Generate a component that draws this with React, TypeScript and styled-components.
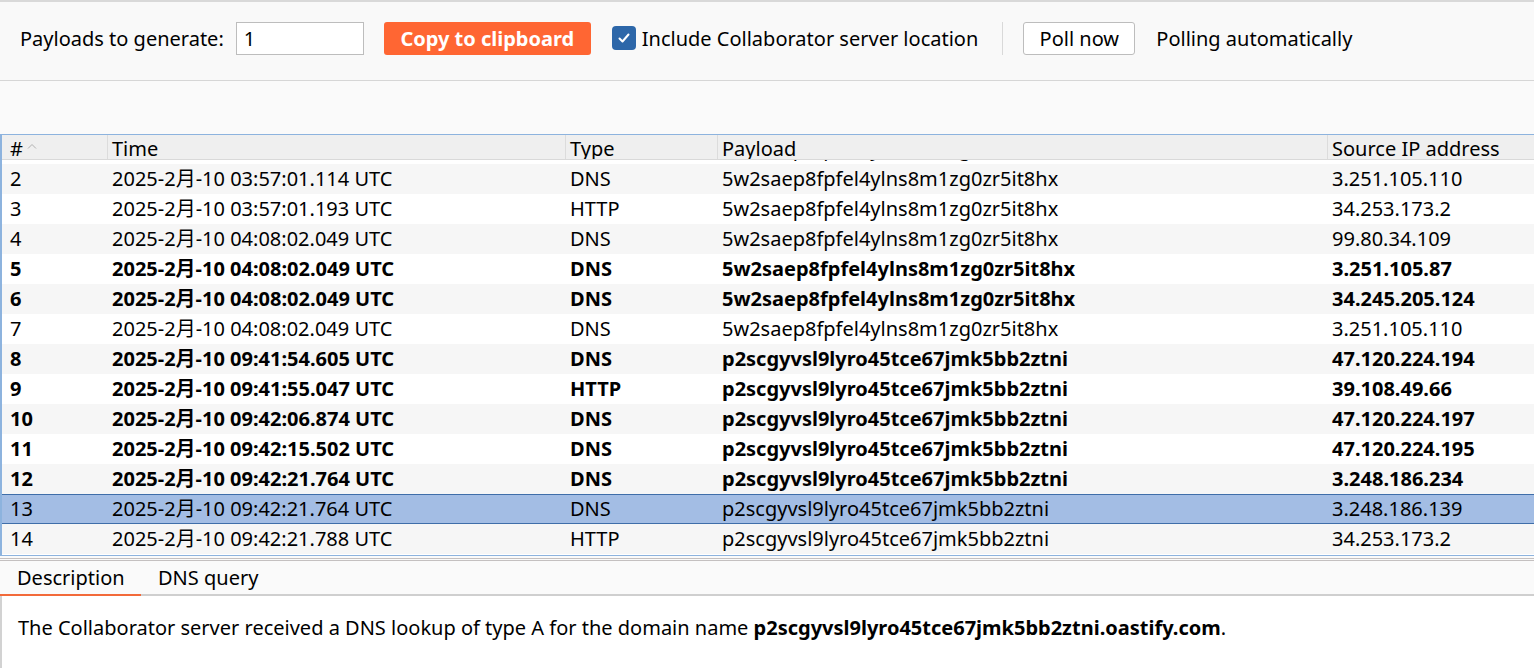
import React from "react";
import styled, { createGlobalStyle, css } from "styled-components";

const Global = createGlobalStyle`
  html, body { margin: 0; padding: 0; background: #fafafa; }
  body { font-family: "Noto Sans", "Noto Sans CJK SC", sans-serif; color: #000; }
  * { box-sizing: border-box; }
`;

const FONT = `"Noto Sans", "Noto Sans CJK SC", sans-serif`;

const Page = styled.div`
  width: 1534px;
  height: 668px;
  display: flex;
  flex-direction: column;
  background: #fafafa;
  overflow: hidden;
  font-family: ${FONT};
  font-size: 20px;
`;

const Toolbar = styled.div`
  height: 81px;
  border-top: 2px solid #d9d9d9;
  border-bottom: 1px solid #d6d6d6;
  display: flex;
  align-items: center;
  padding: 0 0 6px 20px;
  background: #f9f9f9;
`;

const Label = styled.span`
  margin-right: 12px;
  white-space: nowrap;
`;

const NumInput = styled.div`
  width: 128px;
  height: 33px;
  border: 1px solid #bdbdbd;
  background: #fff;
  padding: 0 7px;
  display: flex;
  align-items: center;
  margin-right: 20px;
`;

const Button = styled.div<{ $primary?: boolean }>`
  height: 33px;
  border-radius: 3px;
  display: flex;
  align-items: center;
  justify-content: center;
  white-space: nowrap;
  ${(p) =>
    p.$primary
      ? css`
          width: 207px;
          background: #ff6633;
          color: #fff;
          font-weight: 700;
        `
      : css`
          width: 112px;
          background: #fff;
          border: 1px solid #bdbdbd;
        `}
`;

const CheckWrap = styled.div`
  display: flex;
  align-items: center;
  margin-left: 21px;
  gap: 6px;
`;

const CheckBox = styled.div`
  width: 24px;
  height: 24px;
  border-radius: 4px;
  background: #2d67a9;
  display: flex;
  align-items: center;
  justify-content: center;
`;

const VSep = styled.div`
  width: 1px;
  height: 33px;
  background: #d9d9d9;
  margin: 0 20px 0 24px;
`;

const Status = styled.span`
  margin-left: 21px;
`;

const Spacer = styled.div`
  height: 53px;
  background: #fafafa;
`;

const Table = styled.div`
  height: 422px;
  border-top: 1px solid #8db3de;
  border-left: 2px solid #8db3de;
  border-bottom: 1px solid #8db3de;
  display: flex;
  flex-direction: column;
  position: relative;
  background: #fff;
`;

const cols = "105px 458px 152px 610px 1fr";

const Header = styled.div`
  display: grid;
  grid-template-columns: ${cols};
  height: 25px;
  background: #efefef;
  border-bottom: 1px solid #d9d9d9;
  overflow: hidden;
  position: relative;
  z-index: 2;
`;

const HeadCell = styled.div<{ $first?: boolean }>`
  padding-left: ${(p) => (p.$first ? "8px" : "4px")};
  border-left: ${(p) => (p.$first ? "none" : "1px solid #dcdcdc")};
  line-height: 27px;
  height: 25px;
  white-space: nowrap;
  display: flex;
  align-items: flex-start;
`;

const SortArrow = styled.svg`
  margin: 8px 0 0 4px;
`;

const Body = styled.div`
  flex: 1;
  overflow: hidden;
  position: relative;
`;

const Rows = styled.div`
  margin-top: -26px;
`;

const Row = styled.div<{ $bold?: boolean; $alt?: boolean; $selected?: boolean }>`
  display: grid;
  grid-template-columns: ${cols};
  height: 30px;
  align-items: center;
  font-weight: ${(p) => (p.$bold ? 700 : 400)};
  background: ${(p) => (p.$selected ? "#a3bde4" : p.$alt ? "#f6f6f6" : "#fff")};
  ${(p) =>
    p.$selected &&
    css`
      box-shadow: inset 0 1px 0 #3f6ea9, inset 0 -1px 0 #3f6ea9;
    `}
`;

const Cell = styled.div<{ $first?: boolean }>`
  padding-left: ${(p) => (p.$first ? "8px" : "5px")};
  white-space: nowrap;
  overflow: hidden;
  line-height: 28px;
`;

const Bottom = styled.div`
  flex: 1;
  display: flex;
  flex-direction: column;
  border-top: 3px double #c4c0c0;
  margin-top: 2px;
`;

const Tabs = styled.div`
  height: 35px;
  display: flex;
  align-items: stretch;
  background: #fafafa;
  border-bottom: 2px solid #cfcfcf;
`;

const Tab = styled.div<{ $active?: boolean }>`
  padding: 0 16px 0 17px;
  display: flex;
  align-items: center;
  min-width: ${(p) => (p.$active ? "141px" : "auto")};
  border-bottom: 2px solid ${(p) => (p.$active ? "#f26a3a" : "transparent")};
  margin-bottom: -2px;
`;

const Content = styled.div`
  flex: 1;
  background: #fff;
  border-left: 2px solid #d2d2d2;
  padding: 18px 16px;
`;

type R = {
  n: number;
  time: string;
  type: string;
  payload: string;
  ip: string;
  bold?: boolean;
  sel?: boolean;
};

const P1 = "5w2saep8fpfel4ylns8m1zg0zr5it8hx";
const P2 = "p2scgyvsl9lyro45tce67jmk5bb2ztni";

const rows: R[] = [
  { n: 1, time: "2025-2月-10 03:57:01.060 UTC", type: "DNS", payload: P1, ip: "3.251.105.87" },
  { n: 2, time: "2025-2月-10 03:57:01.114 UTC", type: "DNS", payload: P1, ip: "3.251.105.110" },
  { n: 3, time: "2025-2月-10 03:57:01.193 UTC", type: "HTTP", payload: P1, ip: "34.253.173.2" },
  { n: 4, time: "2025-2月-10 04:08:02.049 UTC", type: "DNS", payload: P1, ip: "99.80.34.109" },
  { n: 5, time: "2025-2月-10 04:08:02.049 UTC", type: "DNS", payload: P1, ip: "3.251.105.87", bold: true },
  { n: 6, time: "2025-2月-10 04:08:02.049 UTC", type: "DNS", payload: P1, ip: "34.245.205.124", bold: true },
  { n: 7, time: "2025-2月-10 04:08:02.049 UTC", type: "DNS", payload: P1, ip: "3.251.105.110" },
  { n: 8, time: "2025-2月-10 09:41:54.605 UTC", type: "DNS", payload: P2, ip: "47.120.224.194", bold: true },
  { n: 9, time: "2025-2月-10 09:41:55.047 UTC", type: "HTTP", payload: P2, ip: "39.108.49.66", bold: true },
  { n: 10, time: "2025-2月-10 09:42:06.874 UTC", type: "DNS", payload: P2, ip: "47.120.224.197", bold: true },
  { n: 11, time: "2025-2月-10 09:42:15.502 UTC", type: "DNS", payload: P2, ip: "47.120.224.195", bold: true },
  { n: 12, time: "2025-2月-10 09:42:21.764 UTC", type: "DNS", payload: P2, ip: "3.248.186.234", bold: true },
  { n: 13, time: "2025-2月-10 09:42:21.764 UTC", type: "DNS", payload: P2, ip: "3.248.186.139", sel: true },
  { n: 14, time: "2025-2月-10 09:42:21.788 UTC", type: "HTTP", payload: P2, ip: "34.253.173.2" },
];

export default function App() {
  return (
    <Page>
      <Global />
      <Toolbar>
        <Label>Payloads to generate:</Label>
        <NumInput>1</NumInput>
        <Button $primary>Copy to clipboard</Button>
        <CheckWrap>
          <CheckBox>
            <svg width="14" height="14" viewBox="0 0 14 14">
              <path d="M2.5 7.5 L5.5 10.5 L11.5 3.5" stroke="#fff" strokeWidth="2" fill="none" strokeLinecap="round" strokeLinejoin="round" />
            </svg>
          </CheckBox>
          <span>Include Collaborator server location</span>
        </CheckWrap>
        <VSep />
        <Button>Poll now</Button>
        <Status>Polling automatically</Status>
      </Toolbar>
      <Spacer />
      <Table>
        <Header>
          <HeadCell $first>
            #
            <SortArrow width="10" height="6" viewBox="0 0 10 6">
              <path d="M1 5.5 L5 1.5 L9 5.5" stroke="#b0b0b0" strokeWidth="1" fill="none" />
            </SortArrow>
          </HeadCell>
          <HeadCell>Time</HeadCell>
          <HeadCell>Type</HeadCell>
          <HeadCell>Payload</HeadCell>
          <HeadCell>Source IP address</HeadCell>
        </Header>
        <Body>
          <Rows>
            {rows.map((r) => (
              <Row key={r.n} $bold={r.bold} $alt={r.n % 2 === 0} $selected={r.sel}>
                <Cell $first>{r.n}</Cell>
                <Cell>{r.time}</Cell>
                <Cell>{r.type}</Cell>
                <Cell>{r.payload}</Cell>
                <Cell>{r.ip}</Cell>
              </Row>
            ))}
          </Rows>
        </Body>
      </Table>
      <Bottom>
        <Tabs>
          <Tab $active>Description</Tab>
          <Tab>DNS query</Tab>
        </Tabs>
        <Content>
          The Collaborator server received a DNS lookup of type A for the domain name{" "}
          <b>p2scgyvsl9lyro45tce67jmk5bb2ztni.oastify.com</b>.
        </Content>
      </Bottom>
    </Page>
  );
}
